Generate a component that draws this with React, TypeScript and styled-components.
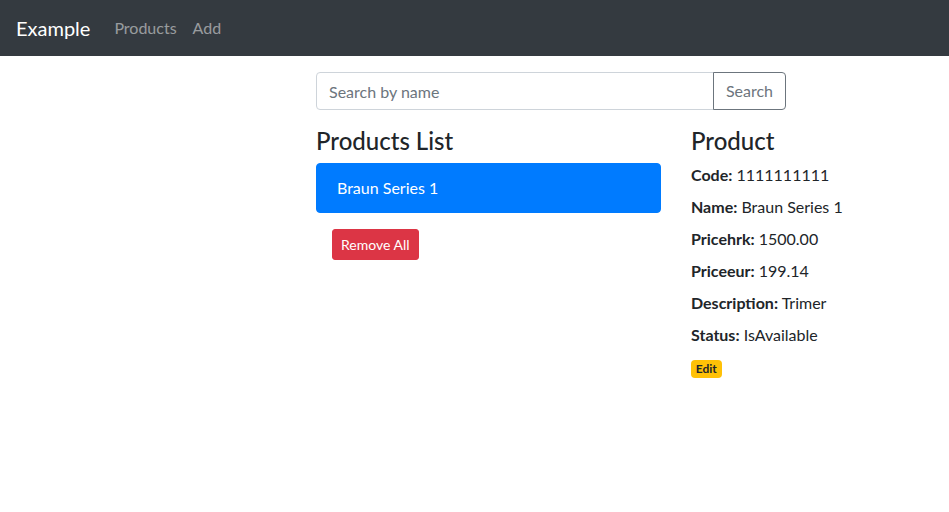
import React from "react";
import styled, { createGlobalStyle } from "styled-components";

const Global = createGlobalStyle`
  html, body { margin: 0; padding: 0; }
  body {
    font-family: "Segoe UI", Lato, "Noto Sans", "Liberation Sans", sans-serif;
    font-size: 16px;
    line-height: 1.5;
    color: #212529;
    background: #fff;
    overflow-x: hidden;
  }
  *, *::before, *::after { box-sizing: border-box; }
`;

const Navbar = styled.nav`
  display: flex;
  align-items: center;
  height: 56px;
  padding: 8px 16px;
  background: #343a40;
`;

const Brand = styled.a`
  font-size: 20px;
  line-height: 30px;
  padding: 5px 0;
  margin-right: 16px;
  color: #fff;
  text-decoration: none;
`;

const NavLinks = styled.div`
  display: flex;
`;

const NavLink = styled.a`
  padding: 8px;
  color: rgba(255, 255, 255, 0.5);
  text-decoration: none;
`;

const Main = styled.div`
  margin-top: 16px;
  padding-left: 301px;
`;

const ListRow = styled.div`
  display: grid;
  grid-template-columns: 375px minmax(0, 1fr);
  max-width: 750px;
`;

const Col = styled.div<{ $full?: boolean }>`
  padding: 0 15px;
  min-width: 0;
  ${(p) => (p.$full ? "grid-column: 1 / -1; width: 500px; max-width: 100%;" : "")}
`;

const InputGroup = styled.div`
  display: flex;
  margin-bottom: 16px;
`;

const SearchInput = styled.input`
  flex: 1 1 auto;
  min-width: 0;
  height: 38px;
  padding: 6px 12px;
  font: inherit;
  color: #495057;
  border: 1px solid #ced4da;
  border-radius: 4px 0 0 4px;
  &::placeholder { color: #6c757d; }
`;

const OutlineButton = styled.button`
  height: 38px;
  padding: 6px 12px;
  font: inherit;
  color: #6c757d;
  background: transparent;
  border: 1px solid #6c757d;
  border-radius: 0 4px 4px 0;
  margin-left: -1px;
`;

const Heading = styled.h4`
  font-size: 24px;
  font-weight: 500;
  line-height: 1.2;
  padding-top: 1px;
  margin: 0 0 7px;
  white-space: nowrap;
`;

const ListGroup = styled.ul`
  list-style: none;
  margin: 0;
  padding: 0;
`;

const ListItem = styled.li<{ $active?: boolean }>`
  padding: 12px 20px;
  border: 1px solid ${(p) => (p.$active ? "#007bff" : "rgba(0,0,0,.125)")};
  background: ${(p) => (p.$active ? "#007bff" : "#fff")};
  color: ${(p) => (p.$active ? "#fff" : "#212529")};
  border-radius: 4px;
`;

const DangerButton = styled.button`
  margin: 16px;
  padding: 4px 8px;
  font: inherit;
  font-size: 14px;
  line-height: 1.5;
  color: #fff;
  background: #dc3545;
  border: 1px solid #dc3545;
  border-radius: 3px;
`;

const Field = styled.div`
  white-space: nowrap;
`;

const Label = styled.label`
  display: inline-block;
  margin-bottom: 8px;
  strong { font-weight: 700; }
`;

const Badge = styled.a`
  display: inline-block;
  padding: 3px 4.8px;
  font-size: 12px;
  font-weight: 700;
  line-height: 1;
  color: #212529;
  background: #ffc107;
  border-radius: 4px;
  text-decoration: none;
  vertical-align: baseline;
`;

const fields: [string, string][] = [
  ["Code", "1111111111"],
  ["Name", "Braun Series 1"],
  ["Pricehrk", "1500.00"],
  ["Priceeur", "199.14"],
  ["Description", "Trimer"],
  ["Status", "IsAvailable"],
];

export default function App() {
  return (
    <>
      <Global />
      <Navbar>
        <Brand href="#">Example</Brand>
        <NavLinks>
          <NavLink href="#">Products</NavLink>
          <NavLink href="#">Add</NavLink>
        </NavLinks>
      </Navbar>
      <Main>
        <ListRow>
          <Col $full>
            <InputGroup>
              <SearchInput placeholder="Search by name" />
              <OutlineButton>Search</OutlineButton>
            </InputGroup>
          </Col>
          <Col>
            <Heading>Products List</Heading>
            <ListGroup>
              <ListItem $active>Braun Series 1</ListItem>
            </ListGroup>
            <DangerButton>Remove All</DangerButton>
          </Col>
          <Col>
            <Heading>Product</Heading>
            {fields.map(([k, v]) => (
              <Field key={k}>
                <Label>
                  <strong>{k}:</strong>
                </Label>{" "}
                {v}
              </Field>
            ))}
            <Badge href="#">Edit</Badge>
          </Col>
        </ListRow>
      </Main>
    </>
  );
}
